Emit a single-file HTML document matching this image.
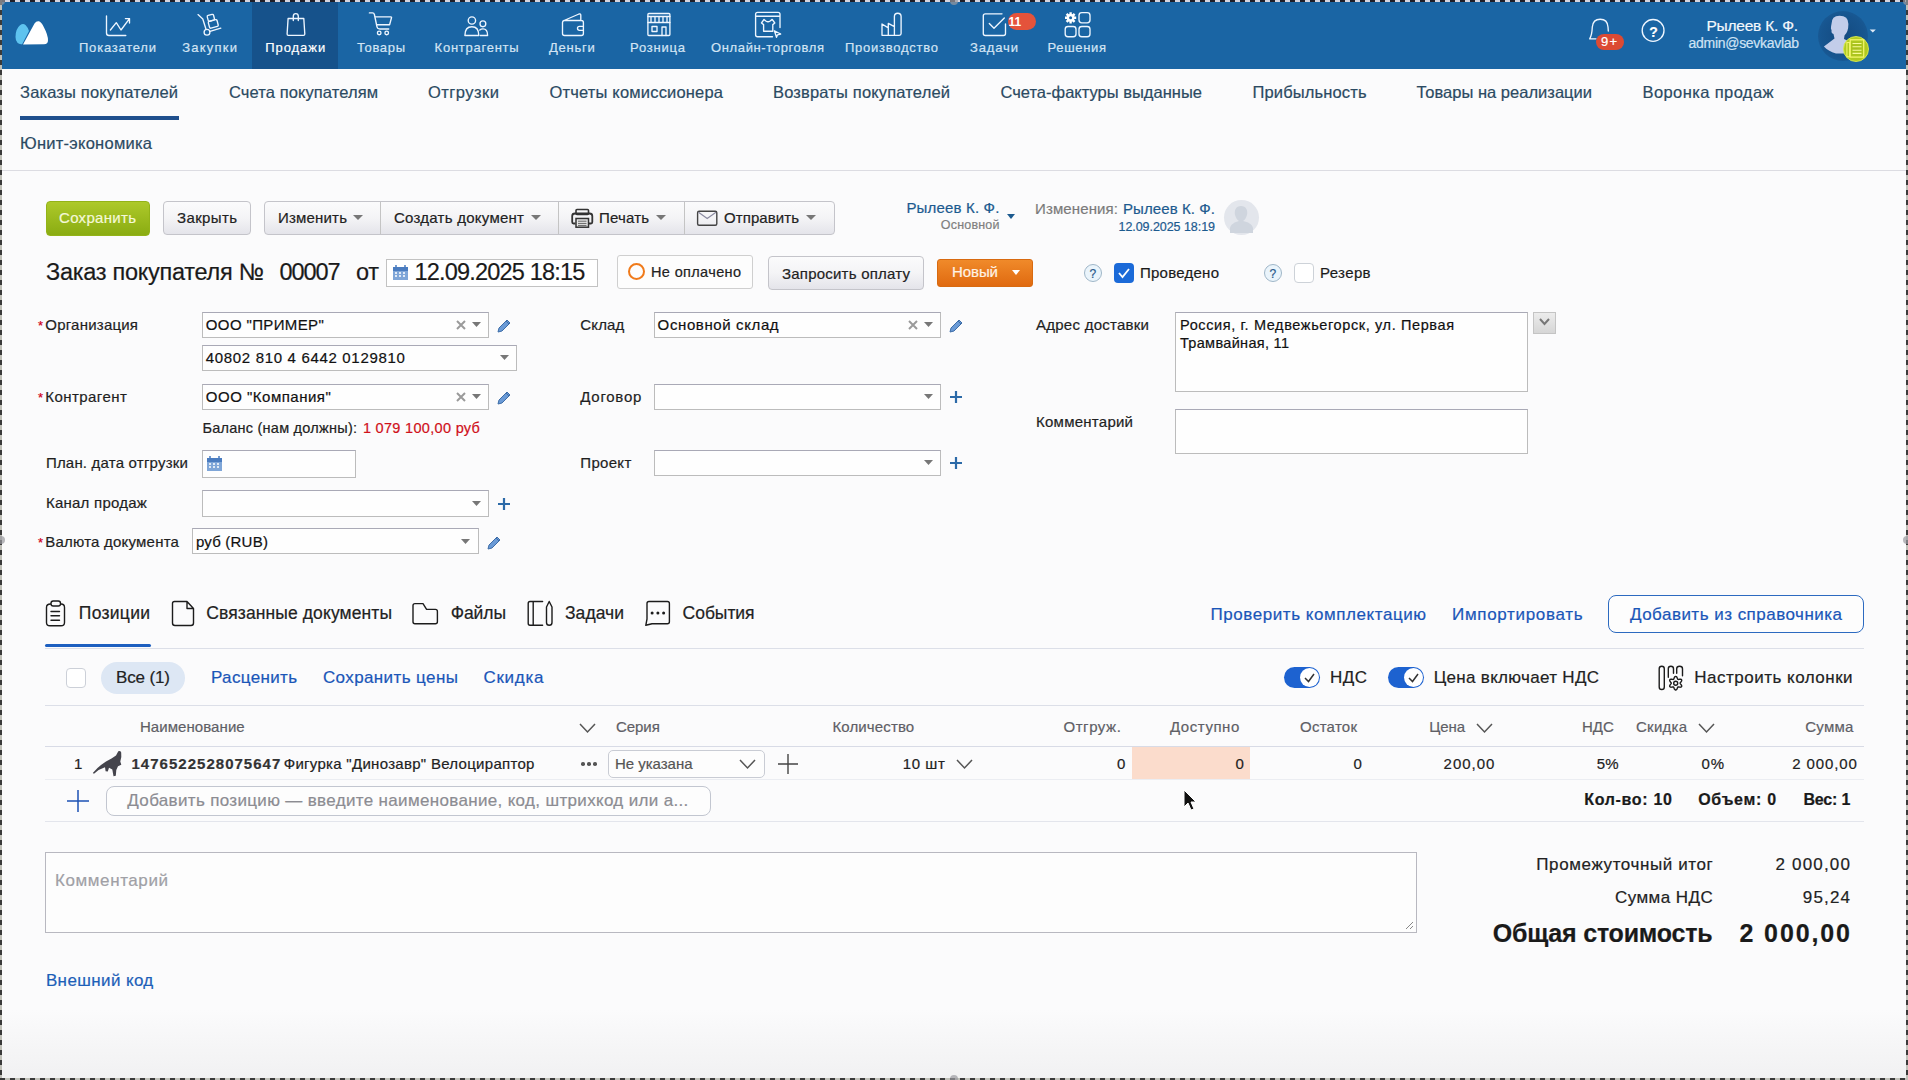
<!DOCTYPE html>
<html><head><meta charset="utf-8"><style>
html,body{margin:0;padding:0;}
body{width:1908px;height:1080px;position:relative;overflow:hidden;background:#fbfbfc;font-family:"Liberation Sans", sans-serif;}
div{-webkit-text-stroke:0.2px currentColor;}
</style></head><body>
<div style="position:absolute;left:0px;top:0px;width:1908px;height:1080px;background:linear-gradient(#fbfbfc 0,#fbfbfc 1010px,#f1f1f2 1078px)"></div>
<div style="position:absolute;left:0px;top:0px;width:1908px;height:69px;background:#1a65a4"></div>
<div style="position:absolute;left:252px;top:0px;width:86px;height:69px;background:#16528b"></div>
<svg style="position:absolute;left:0;top:0" width="60" height="60"><path d="M23 44.4 Q15.5 44.4 15.5 37 Q15.5 29 20 25.3 Q23 23 25.5 25 Q28 27.5 29 31 L22 44.4 Z" fill="#5ec3ef"/><path d="M23 44.4 L34.5 23.5 Q36.5 20.6 39 21.3 Q41.5 22.3 44 27.5 Q48 35 48 40.3 Q48 44.3 44 44.3 Z" fill="#ffffff"/></svg>
<svg style="position:absolute;left:0;top:0" width="1908" height="69" viewBox="0 0 1908 69">
<path d="M106.5 16 V33 Q106.5 35.5 109 35.5 H125.8" fill="none" stroke="#eef6ff" stroke-width="1.35" stroke-linecap="round" stroke-linejoin="round"/>
<path d="M110.4 30 L116.3 22.7 L121 30 L129.5 18.6 M125.4 18.6 H129.5 V23" fill="none" stroke="#eef6ff" stroke-width="1.35" stroke-linecap="round" stroke-linejoin="round"/>
<path d="M198 14.6 L202.8 19 L206 29.2" fill="none" stroke="#eef6ff" stroke-width="1.35" stroke-linecap="round" stroke-linejoin="round"/><circle cx="207" cy="32.2" r="2.9" fill="none" stroke="#eef6ff" stroke-width="1.35" stroke-linecap="round" stroke-linejoin="round"/><path d="M210 31.3 L220.8 28.2" fill="none" stroke="#eef6ff" stroke-width="1.35" stroke-linecap="round" stroke-linejoin="round"/>
<g transform="rotate(-15 212.5 21)"><rect x="208.5" y="14.5" width="6.5" height="6" rx="1.2" fill="none" stroke="#eef6ff" stroke-width="1.35" stroke-linecap="round" stroke-linejoin="round"/><rect x="208" y="20.5" width="9" height="7" rx="1.2" fill="none" stroke="#eef6ff" stroke-width="1.35" stroke-linecap="round" stroke-linejoin="round"/></g>
<path d="M288.1 18.5 H303.8 L304.8 34 Q304.8 35.3 303.5 35.3 H288.4 Q287.1 35.3 287.1 34 Z" fill="none" stroke="#eef6ff" stroke-width="1.35" stroke-linecap="round" stroke-linejoin="round"/>
<path d="M293.3 20.5 V16.3 Q293.3 13.6 295.8 13.6 Q298.3 13.6 298.3 16.3 V20.5" fill="none" stroke="#eef6ff" stroke-width="1.35" stroke-linecap="round" stroke-linejoin="round"/>
<path d="M369.4 12.9 H372.5 Q374 12.9 374.4 14.5 L376.9 26.5 Q377.3 29 379.8 29 H388.7" fill="none" stroke="#eef6ff" stroke-width="1.35" stroke-linecap="round" stroke-linejoin="round"/>
<path d="M375.3 16.8 H390.8 Q391.8 16.8 391.5 17.8 L389.6 24.7 H376.8" fill="none" stroke="#eef6ff" stroke-width="1.35" stroke-linecap="round" stroke-linejoin="round"/>
<circle cx="379.2" cy="32.9" r="1.8" fill="none" stroke="#eef6ff" stroke-width="1.35" stroke-linecap="round" stroke-linejoin="round"/><circle cx="386.7" cy="32.9" r="1.8" fill="none" stroke="#eef6ff" stroke-width="1.35" stroke-linecap="round" stroke-linejoin="round"/>
<circle cx="471.9" cy="20.5" r="3.7" fill="none" stroke="#eef6ff" stroke-width="1.35" stroke-linecap="round" stroke-linejoin="round"/><path d="M464.9 35.5 Q464.9 26.7 471.9 26.7 Q478.8 26.7 478.8 35.5 Z" fill="none" stroke="#eef6ff" stroke-width="1.35" stroke-linecap="round" stroke-linejoin="round"/>
<circle cx="482.9" cy="23.8" r="2.9" fill="none" stroke="#eef6ff" stroke-width="1.35" stroke-linecap="round" stroke-linejoin="round"/><path d="M480.3 35.5 H487.6 Q487.6 28.9 483 28.9 Q481 28.9 479.8 30" fill="none" stroke="#eef6ff" stroke-width="1.35" stroke-linecap="round" stroke-linejoin="round"/>
<path d="M564.5 20.5 H581.4 Q583.4 20.5 583.4 22.5 V33.5 Q583.4 35.5 581.4 35.5 H564.5 Q562.5 35.5 562.5 33.5 V22.5 Q562.5 21 564 20.5 L579 14 Q580.8 13.3 580.8 15.3 V20.5" fill="none" stroke="#eef6ff" stroke-width="1.35" stroke-linecap="round" stroke-linejoin="round"/>
<path d="M583.4 26.3 H579.5 Q577.5 26.3 577.5 28.3 Q577.5 30.4 579.5 30.4 H583.4" fill="none" stroke="#eef6ff" stroke-width="1.35" stroke-linecap="round" stroke-linejoin="round"/>
<rect x="647.9" y="13.5" width="22" height="22" rx="1" fill="none" stroke="#eef6ff" stroke-width="1.35" stroke-linecap="round" stroke-linejoin="round"/><path d="M647.9 16.5 H669.9 M647.9 22.5 H669.9 M651 16.5 V22.5 M655 16.5 V22.5 M659 16.5 V22.5 M663 16.5 V22.5 M667 16.5 V22.5" fill="none" stroke="#eef6ff" stroke-width="1.35" stroke-linecap="round" stroke-linejoin="round"/>
<rect x="652" y="26.5" width="5" height="5" fill="none" stroke="#eef6ff" stroke-width="1.35" stroke-linecap="round" stroke-linejoin="round"/><path d="M662 35.5 V27 H666 V35.5" fill="none" stroke="#eef6ff" stroke-width="1.35" stroke-linecap="round" stroke-linejoin="round"/>
<path d="M772.5 36.7 H757.6 Q755.6 36.7 755.6 34.7 V14.3 Q755.6 12.3 757.6 12.3 H778 Q780 12.3 780 14.3 V27.5 M755.6 16.3 H780" fill="none" stroke="#eef6ff" stroke-width="1.35" stroke-linecap="round" stroke-linejoin="round"/>
<path d="M764 19.4 L766.2 21.2 Q768 22.4 769.8 21.2 L772.2 19.4 L774.8 23 L772.8 24.6 V31.2 H763.6 V24.6 L761.5 23 Z" fill="none" stroke="#eef6ff" stroke-width="1.35" stroke-linecap="round" stroke-linejoin="round"/>
<path d="M774.4 30.8 L780.7 34 L777.5 34.8 L776.5 37.3 Z" fill="none" stroke="#eef6ff" stroke-width="1.35" stroke-linecap="round" stroke-linejoin="round"/>
<path d="M882 35.3 V24 L888.3 27.8 M888.3 35.3 V23.4 L894.4 26.6 M894.4 35.3 V16.5 Q894.4 13.2 897.7 13.2 Q901.1 13.2 901.1 16.5 V33.5 Q901.1 35.3 899.3 35.3 H882" fill="none" stroke="#eef6ff" stroke-width="1.35" stroke-linecap="round" stroke-linejoin="round"/>
<path d="M1002 13.8 H985.3 Q983.3 13.8 983.3 15.8 V33.5 Q983.3 35.5 985.3 35.5 H1003.5 Q1005.5 35.5 1005.5 33.5 V24" fill="none" stroke="#eef6ff" stroke-width="1.35" stroke-linecap="round" stroke-linejoin="round"/>
<path d="M989.3 23.5 L994 28.3 L1004.3 18" fill="none" stroke="#eef6ff" stroke-width="1.35" stroke-linecap="round" stroke-linejoin="round"/>
<rect x="1079" y="12.6" width="11" height="10.3" rx="2.8" fill="none" stroke="#eef6ff" stroke-width="1.35" stroke-linecap="round" stroke-linejoin="round"/><rect x="1065.2" y="26.5" width="10.8" height="10.2" rx="2.8" fill="none" stroke="#eef6ff" stroke-width="1.35" stroke-linecap="round" stroke-linejoin="round"/><rect x="1079" y="26.5" width="11" height="10.2" rx="2.8" fill="none" stroke="#eef6ff" stroke-width="1.35" stroke-linecap="round" stroke-linejoin="round"/>
<g transform="translate(1070.6 17.8)"><circle r="3.9" fill="#fff"/><path d="M0 -5.6 V5.6 M-5.6 0 H5.6 M-4 -4 L4 4 M4 -4 L-4 4" stroke="#fff" stroke-width="2.4"/><circle r="1.5" fill="#1a65a4"/></g>
<path d="M1589.7 38.8 Q1592 35 1592.3 27 Q1593 19.2 1600.2 19.2 Q1607.5 19.2 1608 27 L1608.3 31 M1589.7 38.8 H1596" fill="none" stroke="#eef6ff" stroke-width="1.35" stroke-linecap="round" stroke-linejoin="round"/>
<circle cx="1653.1" cy="30.4" r="10.9" fill="none" stroke="#eef6ff" stroke-width="1.35" stroke-linecap="round" stroke-linejoin="round"/>
<path d="M1869.7 29.5 H1875.8 L1872.8 32.6 Z" fill="#dfeaf6"/>
</svg>
<div style="position:absolute;left:1008px;top:12.5px;width:28px;height:17px;border-radius:8.5px;background:#e4533b"></div>
<div style="position:absolute;left:1596px;top:33.5px;width:28px;height:16.5px;border-radius:8px;background:#dc4a33"></div>
<div style="position:absolute;left:1818px;top:11px;width:50px;height:50px;border-radius:25px;background:radial-gradient(circle at 50% 50%,#144a80 0,#17558f 60%,#1a62a0 100%)"></div>
<svg style="position:absolute;left:0;top:0" width="1908" height="69"><path d="M1839.5 15.8 Q1848.4 15.8 1848.4 24 Q1848.4 32 1844.5 35.5 L1844 39 Q1852 42 1855 48 V53.4 H1836 Q1828 51 1823.9 46.4 Q1830 42 1834.5 38.5 L1833.5 34 Q1831 33 1831.6 30.5 L1830.9 28.3 Q1831 26 1831.5 24 Q1831.5 15.8 1839.5 15.8 Z" fill="#c3cdea"/></svg>
<div style="position:absolute;left:1843px;top:35.5px;width:26px;height:26px;border-radius:13px;background:radial-gradient(circle,#a6bd1a 0,#b2cc22 70%,#cfe23a 100%);border:1.5px solid #d6e84a;box-sizing:border-box"></div>
<svg style="position:absolute;left:0;top:0" width="1908" height="69"><rect x="1850.2" y="39.8" width="13.5" height="17.3" fill="none" stroke="#f2f56a" stroke-width="1.3"/><rect x="1846.9" y="42.5" width="2.6" height="14.3" fill="none" stroke="#f2f56a" stroke-width="1.1"/><path d="M1852.5 43.5 H1861.5 M1852.5 46.8 H1861.5 M1852.5 50.2 H1861.5 M1852.5 53.4 H1861.5" stroke="#f8fa9a" stroke-width="1.1"/></svg>
<div style="position:absolute;left:20px;top:116px;width:159px;height:4px;background:#1f4f8d"></div>
<div style="position:absolute;left:0px;top:170px;width:1908px;height:1px;background:#dcdce2"></div>
<div style="position:absolute;left:46px;top:201px;width:104px;height:35px;background:linear-gradient(#adc92a,#8aac12);border:1px solid #93b318;border-radius:4px;box-sizing:border-box"></div>
<div style="position:absolute;left:163px;top:201px;width:88px;height:34px;background:linear-gradient(#fbfbfc 0,#f4f4f6 50%,#e4e4ea 100%);border:1px solid #c4c4ca;border-radius:4px;box-sizing:border-box"></div>
<div style="position:absolute;left:264px;top:201px;width:571px;height:34px;background:linear-gradient(#fbfbfc 0,#f4f4f6 50%,#e4e4ea 100%);border:1px solid #c4c4ca;border-radius:4px;box-sizing:border-box"></div>
<div style="position:absolute;left:380px;top:202px;width:1px;height:32px;background:#c4c4c4"></div>
<div style="position:absolute;left:558px;top:202px;width:1px;height:32px;background:#c4c4c4"></div>
<div style="position:absolute;left:684px;top:202px;width:1px;height:32px;background:#c4c4c4"></div>
<svg style="position:absolute;left:353px;top:215px" width="10" height="5"><path d="M0 0 H10 L5.0 5 Z" fill="#777"/></svg>
<svg style="position:absolute;left:531px;top:215px" width="10" height="5"><path d="M0 0 H10 L5.0 5 Z" fill="#777"/></svg>
<svg style="position:absolute;left:656px;top:215px" width="10" height="5"><path d="M0 0 H10 L5.0 5 Z" fill="#777"/></svg>
<svg style="position:absolute;left:806px;top:215px" width="10" height="5"><path d="M0 0 H10 L5.0 5 Z" fill="#777"/></svg>
<svg style="position:absolute;left:0;top:0" width="800" height="240"><rect x="576" y="209.5" width="12.5" height="5" rx="1" fill="none" stroke="#333" stroke-width="1.6"/><path d="M575.5 223.5 H573.5 Q572.2 223.5 572.2 222 V216 Q572.2 213.5 575 213.5 H589.5 Q592.3 213.5 592.3 216 V222 Q592.3 223.5 591 223.5 H589" fill="none" stroke="#333" stroke-width="1.8"/><rect x="576" y="218.5" width="12.5" height="8.7" fill="#e8e8e8" stroke="#333" stroke-width="1.5"/><path d="M578 221.2 H586.5 M578 223.4 H586.5 M578 225.4 H586.5" stroke="#555" stroke-width="0.9"/><rect x="697.6" y="211.3" width="19.2" height="14" rx="1.5" fill="none" stroke="#444" stroke-width="1.4"/><path d="M698.5 212.3 L707.2 218.5 L716 212.3" fill="none" stroke="#8a8aa0" stroke-width="1.2"/></svg>
<svg style="position:absolute;left:1007px;top:214px" width="8" height="5"><path d="M0 0 H8 L4.0 5 Z" fill="#1c5a8f"/></svg>
<div style="position:absolute;left:1224px;top:200px;width:35px;height:35px;border-radius:18px;background:#e3e6ec"></div>
<svg style="position:absolute;left:1229px;top:203px;overflow:visible" width="25" height="30" viewBox="0 0 25 30"><path d="M12 3 C17 3 19 7 18 12 C17 15 16 17 14 18 C19 19 23 21 24 25 V30 H1 V25 C2 21 6 19 10 18 C8 17 7 15 6 12 C5 7 7 3 12 3 Z" fill="#cfd5de"/></svg>
<div style="position:absolute;left:386px;top:259px;width:212px;height:28px;background:#fff;border:1px solid #c2c2c2;box-sizing:border-box"></div>
<svg style="position:absolute;left:392px;top:264px;overflow:visible" width="17" height="17" viewBox="0 0 17 17"><rect x="1" y="3" width="15" height="13" fill="#7fa6d8"/><rect x="1" y="3" width="15" height="4" fill="#4a7cc0"/><path d="M4 1 V5 M13 1 V5" stroke="#4a7cc0" stroke-width="1.5"/><path d="M3 9 H5 M7 9 H9 M11 9 H13 M3 12 H5 M7 12 H9 M11 12 H13" stroke="#fff" stroke-width="1.5"/></svg>
<div style="position:absolute;left:617px;top:255px;width:136px;height:34px;background:#fdfdfd;border:1px solid #cfcfcf;border-radius:3px;box-sizing:border-box"></div>
<div style="position:absolute;left:628px;top:263px;width:17px;height:17px;border-radius:50%;border:2.5px solid #f07a1a;box-sizing:border-box"></div>
<div style="position:absolute;left:768px;top:256px;width:156px;height:34px;background:linear-gradient(#fbfbfc 0,#f4f4f6 50%,#e4e4ea 100%);border:1px solid #c4c4ca;border-radius:4px;box-sizing:border-box"></div>
<div style="position:absolute;left:937px;top:259px;width:96px;height:28px;background:linear-gradient(#f08a2a,#e06a10);border:1px solid #d86a10;border-radius:3px;box-sizing:border-box"></div>
<svg style="position:absolute;left:1012px;top:270px" width="8" height="5"><path d="M0 0 H8 L4.0 5 Z" fill="#ffffff"/></svg>
<div style="position:absolute;left:1084px;top:264px;width:18px;height:18px;border-radius:50%;border:1px solid #9fb6c8;background:#eaf4fb;box-sizing:border-box"></div>
<div style="position:absolute;left:1264px;top:264px;width:18px;height:18px;border-radius:50%;border:1px solid #9fb6c8;background:#eaf4fb;box-sizing:border-box"></div>
<div style="position:absolute;left:1114px;top:263px;width:20px;height:20px;background:#1b6ad8;border-radius:4px"></div>
<svg style="position:absolute;left:1116px;top:265px;overflow:visible" width="16" height="16" viewBox="0 0 16 16"><path d="M3 8 L6.5 12 L13 4" fill="none" stroke="#fff" stroke-width="1.8"/></svg>
<div style="position:absolute;left:1294px;top:263px;width:20px;height:20px;background:#fff;border:1px solid #cdd2d8;border-radius:4px;box-sizing:border-box"></div>
<div style="position:absolute;left:202px;top:312px;width:287px;height:26px;background:#fefefe;border:1px solid #bcbcbc;border-top-color:#a9a9b6;box-sizing:border-box"></div>
<svg style="position:absolute;left:456px;top:320px;overflow:visible" width="10" height="10" viewBox="0 0 10 10"><path d="M1 1 L9 9 M9 1 L1 9" stroke="#9a9a9a" stroke-width="2"/></svg>
<svg style="position:absolute;left:472px;top:322px" width="9" height="5"><path d="M0 0 H9 L4.5 5 Z" fill="#777"/></svg>
<svg style="position:absolute;left:496px;top:317px;overflow:visible" width="16" height="16" viewBox="0 0 16 16"><path d="M3 11 L11 3 L14 6 L6 14 L2 15 Z" fill="#6a9ad6" stroke="#3d6da8" stroke-width="1"/><path d="M10 4 L13 7" stroke="#3d6da8" stroke-width="1"/></svg>
<div style="position:absolute;left:202px;top:345px;width:315px;height:26px;background:#fefefe;border:1px solid #bcbcbc;border-top-color:#a9a9b6;box-sizing:border-box"></div>
<svg style="position:absolute;left:500px;top:355px" width="9" height="5"><path d="M0 0 H9 L4.5 5 Z" fill="#777"/></svg>
<div style="position:absolute;left:202px;top:384px;width:287px;height:26px;background:#fefefe;border:1px solid #bcbcbc;border-top-color:#a9a9b6;box-sizing:border-box"></div>
<svg style="position:absolute;left:456px;top:392px;overflow:visible" width="10" height="10" viewBox="0 0 10 10"><path d="M1 1 L9 9 M9 1 L1 9" stroke="#9a9a9a" stroke-width="2"/></svg>
<svg style="position:absolute;left:472px;top:394px" width="9" height="5"><path d="M0 0 H9 L4.5 5 Z" fill="#777"/></svg>
<svg style="position:absolute;left:496px;top:389px;overflow:visible" width="16" height="16" viewBox="0 0 16 16"><path d="M3 11 L11 3 L14 6 L6 14 L2 15 Z" fill="#6a9ad6" stroke="#3d6da8" stroke-width="1"/><path d="M10 4 L13 7" stroke="#3d6da8" stroke-width="1"/></svg>
<div style="position:absolute;left:202px;top:450px;width:154px;height:28px;background:#fefefe;border:1px solid #bcbcbc;border-top-color:#a9a9b6;box-sizing:border-box"></div>
<svg style="position:absolute;left:206px;top:455px;overflow:visible" width="17" height="17" viewBox="0 0 17 17"><rect x="1" y="3" width="15" height="13" fill="#7fa6d8"/><rect x="1" y="3" width="15" height="4" fill="#4a7cc0"/><path d="M4 1 V5 M13 1 V5" stroke="#4a7cc0" stroke-width="1.5"/><path d="M3 9 H5 M7 9 H9 M11 9 H13 M3 12 H5 M7 12 H9 M11 12 H13" stroke="#fff" stroke-width="1.5"/></svg>
<div style="position:absolute;left:202px;top:490px;width:287px;height:27px;background:#fefefe;border:1px solid #bcbcbc;border-top-color:#a9a9b6;box-sizing:border-box"></div>
<svg style="position:absolute;left:472px;top:501px" width="9" height="5"><path d="M0 0 H9 L4.5 5 Z" fill="#777"/></svg>
<svg style="position:absolute;left:497px;top:497px;overflow:visible" width="14" height="14" viewBox="0 0 14 14"><path d="M7 1 V13 M1 7 H13" stroke="#2c6aa8" stroke-width="2.2"/></svg>
<div style="position:absolute;left:192px;top:528px;width:287px;height:26px;background:#fefefe;border:1px solid #bcbcbc;border-top-color:#a9a9b6;box-sizing:border-box"></div>
<svg style="position:absolute;left:461px;top:539px" width="9" height="5"><path d="M0 0 H9 L4.5 5 Z" fill="#777"/></svg>
<svg style="position:absolute;left:486px;top:534px;overflow:visible" width="16" height="16" viewBox="0 0 16 16"><path d="M3 11 L11 3 L14 6 L6 14 L2 15 Z" fill="#6a9ad6" stroke="#3d6da8" stroke-width="1"/><path d="M10 4 L13 7" stroke="#3d6da8" stroke-width="1"/></svg>
<div style="position:absolute;left:654px;top:312px;width:287px;height:26px;background:#fefefe;border:1px solid #bcbcbc;border-top-color:#a9a9b6;box-sizing:border-box"></div>
<svg style="position:absolute;left:908px;top:320px;overflow:visible" width="10" height="10" viewBox="0 0 10 10"><path d="M1 1 L9 9 M9 1 L1 9" stroke="#9a9a9a" stroke-width="2"/></svg>
<svg style="position:absolute;left:924px;top:322px" width="9" height="5"><path d="M0 0 H9 L4.5 5 Z" fill="#777"/></svg>
<svg style="position:absolute;left:948px;top:317px;overflow:visible" width="16" height="16" viewBox="0 0 16 16"><path d="M3 11 L11 3 L14 6 L6 14 L2 15 Z" fill="#6a9ad6" stroke="#3d6da8" stroke-width="1"/><path d="M10 4 L13 7" stroke="#3d6da8" stroke-width="1"/></svg>
<div style="position:absolute;left:654px;top:384px;width:287px;height:26px;background:#fefefe;border:1px solid #bcbcbc;border-top-color:#a9a9b6;box-sizing:border-box"></div>
<svg style="position:absolute;left:924px;top:394px" width="9" height="5"><path d="M0 0 H9 L4.5 5 Z" fill="#777"/></svg>
<svg style="position:absolute;left:949px;top:390px;overflow:visible" width="14" height="14" viewBox="0 0 14 14"><path d="M7 1 V13 M1 7 H13" stroke="#2c6aa8" stroke-width="2.2"/></svg>
<div style="position:absolute;left:654px;top:450px;width:287px;height:26px;background:#fefefe;border:1px solid #bcbcbc;border-top-color:#a9a9b6;box-sizing:border-box"></div>
<svg style="position:absolute;left:924px;top:460px" width="9" height="5"><path d="M0 0 H9 L4.5 5 Z" fill="#777"/></svg>
<svg style="position:absolute;left:949px;top:456px;overflow:visible" width="14" height="14" viewBox="0 0 14 14"><path d="M7 1 V13 M1 7 H13" stroke="#2c6aa8" stroke-width="2.2"/></svg>
<div style="position:absolute;left:1175px;top:312px;width:353px;height:80px;background:#fefefe;border:1px solid #bcbcbc;border-top-color:#a9a9b6;box-sizing:border-box"></div>
<div style="position:absolute;left:1533px;top:312px;width:23px;height:22px;background:linear-gradient(#ececec,#d6d6d6);border:1px solid #c4c4c4;box-sizing:border-box"></div>
<svg style="position:absolute;left:1539px;top:318px;overflow:visible" width="11" height="8" viewBox="0 0 11 8"><path d="M1 1 L5.5 6 L10 1" fill="none" stroke="#777" stroke-width="2"/></svg>
<div style="position:absolute;left:1175px;top:409px;width:353px;height:45px;background:#fefefe;border:1px solid #bcbcbc;border-top-color:#a9a9b6;box-sizing:border-box"></div>
<svg style="position:absolute;left:0;top:580px" width="800" height="60" viewBox="0 580 800 60">
<path d="M50.5 604 Q46.5 604 46.5 607.5 V622.5 Q46.5 625.8 50 625.8 H61 Q64.5 625.8 64.5 622.5 V607.5 Q64.5 604 61 604" fill="none" stroke="#1c1c1c" stroke-width="1.4" stroke-linejoin="round" stroke-linecap="round"/>
<rect x="51" y="601" width="9.5" height="5" rx="2.2" fill="none" stroke="#1c1c1c" stroke-width="1.4" stroke-linejoin="round" stroke-linecap="round"/>
<path d="M51 611.5 H59.5 M51 615.8 H59.5 M51 620.2 H59.5" fill="none" stroke="#1c1c1c" stroke-width="1.4" stroke-linejoin="round" stroke-linecap="round"/>
<path d="M174.5 601.5 H187 L193.5 608.5 V623 Q193.5 625.5 191 625.5 H175 Q172.5 625.5 172.5 623 V603.5 Q172.5 601.5 174.5 601.5 Z M187 601.5 V608.5 H193.5" fill="none" stroke="#1c1c1c" stroke-width="1.4" stroke-linejoin="round" stroke-linecap="round"/>
<path d="M415 603.6 H423 L426.6 609.4 H435.4 Q437.4 609.4 437.4 611.4 V621.8 Q437.4 623.8 435.4 623.8 H415 Q413 623.8 413 621.8 V605.6 Q413 603.6 415 603.6 Z" fill="none" stroke="#1c1c1c" stroke-width="1.4" stroke-linejoin="round" stroke-linecap="round"/>
<path d="M542.6 601.5 H530 Q528.2 601.5 528.2 603.5 V623.3 Q528.2 625.3 530 625.3 H542.6 M533.2 601.5 V625.3" fill="none" stroke="#1c1c1c" stroke-width="1.4" stroke-linejoin="round" stroke-linecap="round"/>
<path d="M546.5 607 L549.2 601.5 L552 607 V622.5 Q552 625.3 549.2 625.3 Q546.5 625.3 546.5 622.5 Z" fill="none" stroke="#1c1c1c" stroke-width="1.4" stroke-linejoin="round" stroke-linecap="round"/>
<path d="M649 601.5 H667.4 Q669.4 601.5 669.4 603.5 V621.8 Q669.4 623.8 667.4 623.8 H652 L645.8 625.3 L647 619 V603.5 Q647 601.5 649 601.5 Z" fill="none" stroke="#1c1c1c" stroke-width="1.4" stroke-linejoin="round" stroke-linecap="round"/>
<circle cx="652.1" cy="613" r="1.5" fill="#1c1c1c"/><circle cx="657.9" cy="613" r="1.5" fill="#1c1c1c"/><circle cx="663.6" cy="613" r="1.5" fill="#1c1c1c"/>
</svg>
<div style="position:absolute;left:45px;top:644px;width:106px;height:3px;background:#1d5fc0;border-radius:2px"></div>
<div style="position:absolute;left:45px;top:648px;width:1819px;height:1px;background:#dcdfe8"></div>
<div style="position:absolute;left:1608px;top:595px;width:256px;height:38px;background:#fdfdfd;border:1.5px solid #2c6ac0;border-radius:8px;box-sizing:border-box"></div>
<div style="position:absolute;left:66px;top:668px;width:20px;height:20px;background:#fff;border:1.5px solid #ccd0d8;border-radius:4px;box-sizing:border-box"></div>
<div style="position:absolute;left:101px;top:662px;width:84px;height:32px;background:#dde7f4;border-radius:16px"></div>
<div style="position:absolute;left:1284px;top:667px;width:36px;height:21px;background:#1d62d0;border-radius:11px"></div>
<div style="position:absolute;left:1300px;top:668px;width:19px;height:19px;border-radius:50%;background:#fff"></div>
<svg style="position:absolute;left:1303px;top:671px;overflow:visible" width="13" height="13" viewBox="0 0 13 13"><path d="M2 7 L5.5 10.5 L11 3" fill="none" stroke="#333" stroke-width="1.5"/></svg>
<div style="position:absolute;left:1388px;top:667px;width:36px;height:21px;background:#1d62d0;border-radius:11px"></div>
<div style="position:absolute;left:1404px;top:668px;width:19px;height:19px;border-radius:50%;background:#fff"></div>
<svg style="position:absolute;left:1407px;top:671px;overflow:visible" width="13" height="13" viewBox="0 0 13 13"><path d="M2 7 L5.5 10.5 L11 3" fill="none" stroke="#333" stroke-width="1.5"/></svg>
<svg style="position:absolute;left:0;top:0" width="1908" height="720"><rect x="1659.2" y="666.2" width="5.1" height="23.3" rx="2.55" fill="none" stroke="#1c1c1c" stroke-width="1.4" stroke-linejoin="round" stroke-linecap="round"/><path d="M1668.3 677.3 V668.8 Q1668.3 666.3 1670.9 666.3 Q1673.5 666.3 1673.5 668.8 V673.3 M1676.7 673.3 V668.8 Q1676.7 666.3 1679.6 666.3 Q1682.5 666.3 1682.5 668.8 V675.7" fill="none" stroke="#1c1c1c" stroke-width="1.4" stroke-linejoin="round" stroke-linecap="round"/><path d="M1680.10 683.20 L1680.24 683.60 L1680.62 684.07 L1681.11 684.65 L1681.53 685.32 L1681.72 686.01 L1681.59 686.60 L1681.14 687.01 L1680.45 687.19 L1679.66 687.16 L1678.91 687.03 L1678.32 686.94 L1677.90 687.01 L1677.63 687.33 L1677.41 687.90 L1677.15 688.61 L1676.78 689.31 L1676.28 689.81 L1675.70 690.00 L1675.12 689.81 L1674.62 689.31 L1674.25 688.61 L1673.99 687.90 L1673.77 687.33 L1673.50 687.01 L1673.08 686.94 L1672.49 687.03 L1671.74 687.16 L1670.95 687.19 L1670.26 687.01 L1669.81 686.60 L1669.68 686.01 L1669.87 685.32 L1670.29 684.65 L1670.78 684.07 L1671.16 683.60 L1671.30 683.20 L1671.16 682.80 L1670.78 682.33 L1670.29 681.75 L1669.87 681.08 L1669.68 680.39 L1669.81 679.80 L1670.26 679.39 L1670.95 679.21 L1671.74 679.24 L1672.49 679.37 L1673.08 679.46 L1673.50 679.39 L1673.77 679.07 L1673.99 678.50 L1674.25 677.79 L1674.62 677.09 L1675.12 676.59 L1675.70 676.40 L1676.28 676.59 L1676.78 677.09 L1677.15 677.79 L1677.41 678.50 L1677.63 679.07 L1677.90 679.39 L1678.32 679.46 L1678.91 679.37 L1679.66 679.24 L1680.45 679.21 L1681.14 679.39 L1681.59 679.80 L1681.72 680.39 L1681.53 681.08 L1681.11 681.75 L1680.62 682.33 L1680.24 682.80 Z" fill="#fbfbfc" fill="none" stroke="#1c1c1c" stroke-width="1.4" stroke-linejoin="round" stroke-linecap="round"/><circle cx="1675.7" cy="683.2" r="2" fill="none" stroke="#1c1c1c" stroke-width="1.4" stroke-linejoin="round" stroke-linecap="round"/></svg>
<div style="position:absolute;left:45px;top:705px;width:1819px;height:1px;background:#dcdfe8"></div>
<svg style="position:absolute;left:579px;top:723px;overflow:visible" width="17" height="10" viewBox="0 0 17 10"><path d="M1 1 L8.5 9 L16 1" fill="none" stroke="#555" stroke-width="1.5"/></svg>
<svg style="position:absolute;left:1476px;top:723px;overflow:visible" width="17" height="10" viewBox="0 0 17 10"><path d="M1 1 L8.5 9 L16 1" fill="none" stroke="#555" stroke-width="1.5"/></svg>
<svg style="position:absolute;left:1698px;top:723px;overflow:visible" width="17" height="10" viewBox="0 0 17 10"><path d="M1 1 L8.5 9 L16 1" fill="none" stroke="#555" stroke-width="1.5"/></svg>
<div style="position:absolute;left:45px;top:746px;width:1819px;height:1px;background:#d8dbe6"></div>
<div style="position:absolute;left:1132px;top:747px;width:118px;height:33px;background:#fbdccc"></div>
<svg style="position:absolute;left:0;top:0" width="200" height="800"><path d="M92.8 772.9 Q97 768 101 765 L106 761.5 L111.5 758.5 L116 755.5 L118.3 751.2 Q120.5 750.5 121.2 752.5 L121.3 757 L120.3 761.5 L121.3 764.8 L118 766.2 L116.3 770 L115.8 775.8 L113.5 776.2 L112.3 769.5 L109 767.8 L107.8 771.4 L105.6 771.2 L105 767.3 Q99 769 94 773.8 Z" fill="#44444c"/></svg>
<div style="position:absolute;left:581px;top:762px;width:3.5px;height:3.5px;border-radius:50%;background:#555"></div>
<div style="position:absolute;left:587px;top:762px;width:3.5px;height:3.5px;border-radius:50%;background:#555"></div>
<div style="position:absolute;left:593px;top:762px;width:3.5px;height:3.5px;border-radius:50%;background:#555"></div>
<div style="position:absolute;left:608px;top:750px;width:157px;height:28px;background:#fdfdfd;border:1px solid #c9ccd4;border-radius:5px;box-sizing:border-box"></div>
<svg style="position:absolute;left:739px;top:759px;overflow:visible" width="17" height="10" viewBox="0 0 17 10"><path d="M1 1 L8.5 9 L16 1" fill="none" stroke="#555" stroke-width="1.5"/></svg>
<svg style="position:absolute;left:777px;top:753px;overflow:visible" width="22" height="22" viewBox="0 0 22 22"><path d="M11 1 V21 M1 11 H21" stroke="#444" stroke-width="1.4"/></svg>
<svg style="position:absolute;left:955.7px;top:759px;overflow:visible" width="17" height="10" viewBox="0 0 17 10"><path d="M1 1 L8.5 9 L16 1" fill="none" stroke="#555" stroke-width="1.5"/></svg>
<div style="position:absolute;left:45px;top:779px;width:1819px;height:1px;background:#ebedf2"></div>
<svg style="position:absolute;left:66px;top:789px;overflow:visible" width="24" height="24" viewBox="0 0 24 24"><path d="M12 1 V23 M1 12 H23" stroke="#1d52b4" stroke-width="1.5"/></svg>
<div style="position:absolute;left:106px;top:786px;width:605px;height:30px;background:#fdfdfd;border:1.5px solid #c2c6d0;border-radius:8px;box-sizing:border-box"></div>
<div style="position:absolute;left:45px;top:821px;width:1819px;height:1px;background:#e3e5ec"></div>
<svg style="position:absolute;left:1182px;top:789px;overflow:visible" width="16" height="24" viewBox="0 0 16 24"><path d="M2 1 V18 L6 14 L9 21 L12 20 L9 13 L14 13 Z" fill="#111" stroke="#fff" stroke-width="1"/></svg>
<div style="position:absolute;left:45px;top:852px;width:1372px;height:81px;background:#fdfdfd;border:1px solid #b8b8c0;box-sizing:border-box"></div>
<svg style="position:absolute;left:1404px;top:920px;overflow:visible" width="10" height="10" viewBox="0 0 10 10"><path d="M9 2 L2 9 M9 6 L6 9" stroke="#888" stroke-width="1"/></svg>
<div style="position:absolute;left:0px;top:0px;width:1908px;height:1.6px;background:repeating-linear-gradient(90deg,#1e1e28 0 5px,#d4d4e0 5px 10px)"></div>
<div style="position:absolute;left:0px;top:0px;width:1.6px;height:1080px;background:repeating-linear-gradient(#3a3a3a 0 5px,#c0c0b8 5px 10px)"></div>
<div style="position:absolute;left:1906px;top:0px;width:2px;height:1080px;background:repeating-linear-gradient(#3a3a3a 0 5px,#c0c0b8 5px 10px)"></div>
<div style="position:absolute;left:0px;top:1078.4px;width:1908px;height:1.6px;background:repeating-linear-gradient(90deg,#3a3a3a 0 5px,#c0c0b8 5px 10px)"></div>
<div style="position:absolute;left:950px;top:-3px;width:8px;height:8px;border-radius:50%;background:#9a9aa0;opacity:.7"></div>
<div style="position:absolute;left:-3px;top:536px;width:8px;height:8px;border-radius:50%;background:#9a9aa0;opacity:.7"></div>
<div style="position:absolute;left:1903px;top:536px;width:8px;height:8px;border-radius:50%;background:#9a9aa0;opacity:.7"></div>
<div style="position:absolute;left:950px;top:1075px;width:8px;height:8px;border-radius:50%;background:#9a9aa0;opacity:.7"></div>
<div style="position:absolute;left:1903px;top:-3px;width:8px;height:8px;border-radius:50%;background:#9a9aa0;opacity:.7"></div>
<div style="position:absolute;left:-3px;top:-3px;width:8px;height:8px;border-radius:50%;background:#9a9aa0;opacity:.7"></div>
<div style="position:absolute;left:79.00px;top:41.00px;font-size:13px;line-height:13px;font-weight:400;color:#d3e4f4;letter-spacing:0.778px;white-space:pre;">Показатели</div>
<div style="position:absolute;left:182.30px;top:41.00px;font-size:13px;line-height:13px;font-weight:400;color:#d3e4f4;letter-spacing:1.199px;white-space:pre;">Закупки</div>
<div style="position:absolute;left:265.20px;top:41.00px;font-size:13px;line-height:13px;font-weight:400;color:#ffffff;letter-spacing:0.951px;white-space:pre;">Продажи</div>
<div style="position:absolute;left:357.00px;top:41.00px;font-size:13px;line-height:13px;font-weight:400;color:#d3e4f4;letter-spacing:0.653px;white-space:pre;">Товары</div>
<div style="position:absolute;left:434.60px;top:41.00px;font-size:13px;line-height:13px;font-weight:400;color:#d3e4f4;letter-spacing:0.744px;white-space:pre;">Контрагенты</div>
<div style="position:absolute;left:549.00px;top:41.00px;font-size:13px;line-height:13px;font-weight:400;color:#d3e4f4;letter-spacing:0.740px;white-space:pre;">Деньги</div>
<div style="position:absolute;left:630.00px;top:41.00px;font-size:13px;line-height:13px;font-weight:400;color:#d3e4f4;letter-spacing:0.789px;white-space:pre;">Розница</div>
<div style="position:absolute;left:711.00px;top:41.00px;font-size:13px;line-height:13px;font-weight:400;color:#d3e4f4;letter-spacing:0.637px;white-space:pre;">Онлайн-торговля</div>
<div style="position:absolute;left:845.00px;top:41.00px;font-size:13px;line-height:13px;font-weight:400;color:#d3e4f4;letter-spacing:0.749px;white-space:pre;">Производство</div>
<div style="position:absolute;left:970.00px;top:41.00px;font-size:13px;line-height:13px;font-weight:400;color:#d3e4f4;letter-spacing:0.869px;white-space:pre;">Задачи</div>
<div style="position:absolute;left:1047.60px;top:41.00px;font-size:13px;line-height:13px;font-weight:400;color:#d3e4f4;letter-spacing:0.653px;white-space:pre;">Решения</div>
<div style="position:absolute;left:1008.50px;top:15.84px;font-size:12px;line-height:12px;font-weight:700;color:#ffffff;letter-spacing:0.000px;white-space:pre;-webkit-text-stroke:0">11</div>
<div style="position:absolute;left:1601.00px;top:34.60px;font-size:13px;line-height:13px;font-weight:400;color:#ffffff;letter-spacing:1.172px;white-space:pre;">9+</div>
<div style="position:absolute;left:1649.20px;top:25.15px;font-size:14px;line-height:14px;font-weight:700;color:#ffffff;letter-spacing:0.000px;white-space:pre;">?</div>
<div style="position:absolute;left:1706.50px;top:18.38px;font-size:15.5px;line-height:15.5px;font-weight:400;color:#f4f8fc;letter-spacing:-0.232px;white-space:pre;">Рылеев К. Ф.</div>
<div style="position:absolute;left:1688.60px;top:36.15px;font-size:14px;line-height:14px;font-weight:400;color:#cfe2f4;letter-spacing:-0.301px;white-space:pre;">admin@sevkavlab</div>
<div style="position:absolute;left:20.00px;top:84.03px;font-size:16.5px;line-height:16.5px;font-weight:400;color:#2b4a62;letter-spacing:0.161px;white-space:pre;">Заказы покупателей</div>
<div style="position:absolute;left:229.00px;top:84.03px;font-size:16.5px;line-height:16.5px;font-weight:400;color:#2b4a62;letter-spacing:0.093px;white-space:pre;">Счета покупателям</div>
<div style="position:absolute;left:428.00px;top:84.03px;font-size:16.5px;line-height:16.5px;font-weight:400;color:#2b4a62;letter-spacing:0.478px;white-space:pre;">Отгрузки</div>
<div style="position:absolute;left:549.50px;top:84.03px;font-size:16.5px;line-height:16.5px;font-weight:400;color:#2b4a62;letter-spacing:0.178px;white-space:pre;">Отчеты комиссионера</div>
<div style="position:absolute;left:773.00px;top:84.03px;font-size:16.5px;line-height:16.5px;font-weight:400;color:#2b4a62;letter-spacing:0.165px;white-space:pre;">Возвраты покупателей</div>
<div style="position:absolute;left:1000.50px;top:84.03px;font-size:16.5px;line-height:16.5px;font-weight:400;color:#2b4a62;letter-spacing:0.010px;white-space:pre;">Счета-фактуры выданные</div>
<div style="position:absolute;left:1252.50px;top:84.03px;font-size:16.5px;line-height:16.5px;font-weight:400;color:#2b4a62;letter-spacing:0.138px;white-space:pre;">Прибыльность</div>
<div style="position:absolute;left:1416.50px;top:84.03px;font-size:16.5px;line-height:16.5px;font-weight:400;color:#2b4a62;letter-spacing:0.015px;white-space:pre;">Товары на реализации</div>
<div style="position:absolute;left:1642.50px;top:84.03px;font-size:16.5px;line-height:16.5px;font-weight:400;color:#2b4a62;letter-spacing:0.403px;white-space:pre;">Воронка продаж</div>
<div style="position:absolute;left:20.00px;top:134.73px;font-size:16.5px;line-height:16.5px;font-weight:400;color:#2b4a62;letter-spacing:0.256px;white-space:pre;">Юнит-экономика</div>
<div style="position:absolute;left:59.00px;top:210.30px;font-size:15px;line-height:15px;font-weight:400;color:#f4f8d8;letter-spacing:0.307px;white-space:pre;">Сохранить</div>
<div style="position:absolute;left:177.00px;top:210.30px;font-size:15px;line-height:15px;font-weight:400;color:#222;letter-spacing:0.370px;white-space:pre;">Закрыть</div>
<div style="position:absolute;left:278.00px;top:210.30px;font-size:15px;line-height:15px;font-weight:400;color:#222;letter-spacing:0.190px;white-space:pre;">Изменить</div>
<div style="position:absolute;left:394.00px;top:210.30px;font-size:15px;line-height:15px;font-weight:400;color:#222;letter-spacing:0.257px;white-space:pre;">Создать документ</div>
<div style="position:absolute;left:599.00px;top:210.30px;font-size:15px;line-height:15px;font-weight:400;color:#222;letter-spacing:0.172px;white-space:pre;">Печать</div>
<div style="position:absolute;left:724.00px;top:210.30px;font-size:15px;line-height:15px;font-weight:400;color:#222;letter-spacing:0.076px;white-space:pre;">Отправить</div>
<div style="position:absolute;left:906.40px;top:200.30px;font-size:15px;line-height:15px;font-weight:400;color:#1c5a8f;letter-spacing:0.180px;white-space:pre;">Рылеев К. Ф.</div>
<div style="position:absolute;left:940.80px;top:218.92px;font-size:12.5px;line-height:12.5px;font-weight:400;color:#808080;letter-spacing:0.198px;white-space:pre;">Основной</div>
<div style="position:absolute;left:1035.00px;top:201.30px;font-size:15px;line-height:15px;font-weight:400;color:#7a7a7a;letter-spacing:0.122px;white-space:pre;">Изменения:</div>
<div style="position:absolute;left:1123.00px;top:201.30px;font-size:15px;line-height:15px;font-weight:400;color:#1c5a8f;letter-spacing:0.089px;white-space:pre;">Рылеев К. Ф.</div>
<div style="position:absolute;left:1118.50px;top:221.42px;font-size:12.5px;line-height:12.5px;font-weight:400;color:#1c5a8f;letter-spacing:-0.055px;white-space:pre;">12.09.2025 18:19</div>
<div style="position:absolute;left:46.00px;top:261.11px;font-size:23.5px;line-height:23.5px;font-weight:400;color:#1a1a1a;letter-spacing:-0.266px;white-space:pre;">Заказ покупателя №</div>
<div style="position:absolute;left:279.50px;top:261.11px;font-size:23.5px;line-height:23.5px;font-weight:400;color:#1a1a1a;letter-spacing:-1.090px;white-space:pre;">00007</div>
<div style="position:absolute;left:356.00px;top:261.11px;font-size:23.5px;line-height:23.5px;font-weight:400;color:#1a1a1a;letter-spacing:-0.328px;white-space:pre;">от</div>
<div style="position:absolute;left:414.40px;top:261.11px;font-size:23.5px;line-height:23.5px;font-weight:400;color:#1a1a1a;letter-spacing:-0.797px;white-space:pre;">12.09.2025 18:15</div>
<div style="position:absolute;left:651.00px;top:264.73px;font-size:14.5px;line-height:14.5px;font-weight:400;color:#222;letter-spacing:0.361px;white-space:pre;">Не оплачено</div>
<div style="position:absolute;left:782.00px;top:266.30px;font-size:15px;line-height:15px;font-weight:400;color:#222;letter-spacing:0.219px;white-space:pre;">Запросить оплату</div>
<div style="position:absolute;left:952.00px;top:264.30px;font-size:15px;line-height:15px;font-weight:400;color:#fff3e4;letter-spacing:-0.078px;white-space:pre;">Новый</div>
<div style="position:absolute;left:1089.50px;top:267.84px;font-size:12px;line-height:12px;font-weight:400;color:#2a5a8a;letter-spacing:0.000px;white-space:pre;">?</div>
<div style="position:absolute;left:1269.50px;top:267.84px;font-size:12px;line-height:12px;font-weight:400;color:#2a5a8a;letter-spacing:0.000px;white-space:pre;">?</div>
<div style="position:absolute;left:1140.00px;top:265.30px;font-size:15px;line-height:15px;font-weight:400;color:#1a1a1a;letter-spacing:0.250px;white-space:pre;">Проведено</div>
<div style="position:absolute;left:1320.00px;top:265.30px;font-size:15px;line-height:15px;font-weight:400;color:#1a1a1a;letter-spacing:0.373px;white-space:pre;">Резерв</div>
<div style="position:absolute;left:38.00px;top:319.00px;font-size:13px;line-height:13px;font-weight:400;color:#d0021b;letter-spacing:0.000px;white-space:pre;">*</div>
<div style="position:absolute;left:45.30px;top:317.30px;font-size:15px;line-height:15px;font-weight:400;color:#1f1f1f;letter-spacing:0.223px;white-space:pre;">Организация</div>
<div style="position:absolute;left:205.80px;top:317.30px;font-size:15px;line-height:15px;font-weight:400;color:#111;letter-spacing:0.372px;white-space:pre;">ООО "ПРИМЕР"</div>
<div style="position:absolute;left:205.80px;top:350.30px;font-size:15px;line-height:15px;font-weight:400;color:#111;letter-spacing:0.673px;white-space:pre;">40802 810 4 6442 0129810</div>
<div style="position:absolute;left:38.00px;top:391.00px;font-size:13px;line-height:13px;font-weight:400;color:#d0021b;letter-spacing:0.000px;white-space:pre;">*</div>
<div style="position:absolute;left:45.30px;top:389.30px;font-size:15px;line-height:15px;font-weight:400;color:#1f1f1f;letter-spacing:0.438px;white-space:pre;">Контрагент</div>
<div style="position:absolute;left:205.80px;top:389.30px;font-size:15px;line-height:15px;font-weight:400;color:#111;letter-spacing:0.502px;white-space:pre;">ООО "Компания"</div>
<div style="position:absolute;left:202.40px;top:420.73px;font-size:14.5px;line-height:14.5px;font-weight:400;color:#222;letter-spacing:0.245px;white-space:pre;">Баланс (нам должны):</div>
<div style="position:absolute;left:362.90px;top:420.73px;font-size:14.5px;line-height:14.5px;font-weight:400;color:#d0101a;letter-spacing:0.312px;white-space:pre;">1 079 100,00 руб</div>
<div style="position:absolute;left:45.90px;top:455.30px;font-size:15px;line-height:15px;font-weight:400;color:#1f1f1f;letter-spacing:0.204px;white-space:pre;">План. дата отгрузки</div>
<div style="position:absolute;left:45.90px;top:495.30px;font-size:15px;line-height:15px;font-weight:400;color:#1f1f1f;letter-spacing:0.251px;white-space:pre;">Канал продаж</div>
<div style="position:absolute;left:38.00px;top:536.00px;font-size:13px;line-height:13px;font-weight:400;color:#d0021b;letter-spacing:0.000px;white-space:pre;">*</div>
<div style="position:absolute;left:45.30px;top:534.30px;font-size:15px;line-height:15px;font-weight:400;color:#1f1f1f;letter-spacing:0.215px;white-space:pre;">Валюта документа</div>
<div style="position:absolute;left:195.90px;top:534.30px;font-size:15px;line-height:15px;font-weight:400;color:#111;letter-spacing:0.217px;white-space:pre;">руб (RUB)</div>
<div style="position:absolute;left:580.30px;top:317.30px;font-size:15px;line-height:15px;font-weight:400;color:#1f1f1f;letter-spacing:0.145px;white-space:pre;">Склад</div>
<div style="position:absolute;left:657.60px;top:317.30px;font-size:15px;line-height:15px;font-weight:400;color:#111;letter-spacing:0.614px;white-space:pre;">Основной склад</div>
<div style="position:absolute;left:580.30px;top:389.30px;font-size:15px;line-height:15px;font-weight:400;color:#1f1f1f;letter-spacing:0.727px;white-space:pre;">Договор</div>
<div style="position:absolute;left:580.30px;top:455.30px;font-size:15px;line-height:15px;font-weight:400;color:#1f1f1f;letter-spacing:0.316px;white-space:pre;">Проект</div>
<div style="position:absolute;left:1036.00px;top:317.30px;font-size:15px;line-height:15px;font-weight:400;color:#1f1f1f;letter-spacing:0.256px;white-space:pre;">Адрес доставки</div>
<div style="position:absolute;left:1180.00px;top:317.73px;font-size:14.5px;line-height:14.5px;font-weight:400;color:#111;letter-spacing:0.611px;white-space:pre;">Россия, г. Медвежьегорск, ул. Первая</div>
<div style="position:absolute;left:1180.00px;top:335.73px;font-size:14.5px;line-height:14.5px;font-weight:400;color:#111;letter-spacing:0.316px;white-space:pre;">Трамвайная, 11</div>
<div style="position:absolute;left:1036.00px;top:414.30px;font-size:15px;line-height:15px;font-weight:400;color:#1f1f1f;letter-spacing:0.252px;white-space:pre;">Комментарий</div>
<div style="position:absolute;left:78.80px;top:605.19px;font-size:17.5px;line-height:17.5px;font-weight:400;color:#222222;letter-spacing:0.283px;white-space:pre;">Позиции</div>
<div style="position:absolute;left:206.30px;top:605.19px;font-size:17.5px;line-height:17.5px;font-weight:400;color:#222222;letter-spacing:0.102px;white-space:pre;">Связанные документы</div>
<div style="position:absolute;left:450.70px;top:605.19px;font-size:17.5px;line-height:17.5px;font-weight:400;color:#222222;letter-spacing:-0.077px;white-space:pre;">Файлы</div>
<div style="position:absolute;left:565.00px;top:605.19px;font-size:17.5px;line-height:17.5px;font-weight:400;color:#222222;letter-spacing:0.047px;white-space:pre;">Задачи</div>
<div style="position:absolute;left:682.60px;top:605.19px;font-size:17.5px;line-height:17.5px;font-weight:400;color:#222222;letter-spacing:-0.042px;white-space:pre;">События</div>
<div style="position:absolute;left:1210.50px;top:605.61px;font-size:17px;line-height:17px;font-weight:400;color:#1a56b8;letter-spacing:0.559px;white-space:pre;">Проверить комплектацию</div>
<div style="position:absolute;left:1452.00px;top:605.61px;font-size:17px;line-height:17px;font-weight:400;color:#1a56b8;letter-spacing:0.674px;white-space:pre;">Импортировать</div>
<div style="position:absolute;left:1630.00px;top:605.61px;font-size:17px;line-height:17px;font-weight:400;color:#1a56b8;letter-spacing:0.481px;white-space:pre;">Добавить из справочника</div>
<div style="position:absolute;left:116.00px;top:668.61px;font-size:17px;line-height:17px;font-weight:400;color:#222222;letter-spacing:-0.133px;white-space:pre;">Все (1)</div>
<div style="position:absolute;left:211.00px;top:668.61px;font-size:17px;line-height:17px;font-weight:400;color:#1a56b8;letter-spacing:0.342px;white-space:pre;">Расценить</div>
<div style="position:absolute;left:322.90px;top:668.61px;font-size:17px;line-height:17px;font-weight:400;color:#1a56b8;letter-spacing:0.399px;white-space:pre;">Сохранить цены</div>
<div style="position:absolute;left:483.40px;top:668.61px;font-size:17px;line-height:17px;font-weight:400;color:#1a56b8;letter-spacing:0.719px;white-space:pre;">Скидка</div>
<div style="position:absolute;left:1330.00px;top:668.61px;font-size:17px;line-height:17px;font-weight:400;color:#222222;letter-spacing:0.461px;white-space:pre;">НДС</div>
<div style="position:absolute;left:1433.70px;top:668.61px;font-size:17px;line-height:17px;font-weight:400;color:#222222;letter-spacing:0.310px;white-space:pre;">Цена включает НДС</div>
<div style="position:absolute;left:1694.30px;top:668.61px;font-size:17px;line-height:17px;font-weight:400;color:#222222;letter-spacing:0.494px;white-space:pre;">Настроить колонки</div>
<div style="position:absolute;left:139.90px;top:719.30px;font-size:15px;line-height:15px;font-weight:400;color:#5f5f66;letter-spacing:0.074px;white-space:pre;">Наименование</div>
<div style="position:absolute;left:616.00px;top:719.30px;font-size:15px;line-height:15px;font-weight:400;color:#5f5f66;letter-spacing:-0.058px;white-space:pre;">Серия</div>
<div style="position:absolute;left:832.40px;top:719.30px;font-size:15px;line-height:15px;font-weight:400;color:#5f5f66;letter-spacing:0.137px;white-space:pre;">Количество</div>
<div style="position:absolute;left:1063.50px;top:719.30px;font-size:15px;line-height:15px;font-weight:400;color:#5f5f66;letter-spacing:0.540px;white-space:pre;">Отгруж.</div>
<div style="position:absolute;left:1170.00px;top:719.30px;font-size:15px;line-height:15px;font-weight:400;color:#5f5f66;letter-spacing:0.547px;white-space:pre;">Доступно</div>
<div style="position:absolute;left:1300.00px;top:719.30px;font-size:15px;line-height:15px;font-weight:400;color:#5f5f66;letter-spacing:0.250px;white-space:pre;">Остаток</div>
<div style="position:absolute;left:1429.30px;top:719.30px;font-size:15px;line-height:15px;font-weight:400;color:#5f5f66;letter-spacing:-0.126px;white-space:pre;">Цена</div>
<div style="position:absolute;left:1582.00px;top:719.30px;font-size:15px;line-height:15px;font-weight:400;color:#5f5f66;letter-spacing:-0.014px;white-space:pre;">НДС</div>
<div style="position:absolute;left:1636.00px;top:719.30px;font-size:15px;line-height:15px;font-weight:400;color:#5f5f66;letter-spacing:0.247px;white-space:pre;">Скидка</div>
<div style="position:absolute;left:1805.30px;top:719.30px;font-size:15px;line-height:15px;font-weight:400;color:#5f5f66;letter-spacing:0.215px;white-space:pre;">Сумма</div>
<div style="position:absolute;left:74.00px;top:756.30px;font-size:15px;line-height:15px;font-weight:400;color:#222222;letter-spacing:0.000px;white-space:pre;">1</div>
<div style="position:absolute;left:131.50px;top:756.30px;font-size:15px;line-height:15px;font-weight:700;color:#333;letter-spacing:1.021px;white-space:pre;">1476522528075647</div>
<div style="position:absolute;left:283.70px;top:756.30px;font-size:15px;line-height:15px;font-weight:400;color:#222222;letter-spacing:0.292px;white-space:pre;">Фигурка "Динозавр" Велоцираптор</div>
<div style="position:absolute;left:615.00px;top:756.30px;font-size:15px;line-height:15px;font-weight:400;color:#555;letter-spacing:-0.030px;white-space:pre;">Не указана</div>
<div style="position:absolute;left:902.80px;top:756.30px;font-size:15px;line-height:15px;font-weight:400;color:#222222;letter-spacing:0.559px;white-space:pre;">10 шт</div>
<div style="position:absolute;left:1117.00px;top:756.30px;font-size:15px;line-height:15px;font-weight:400;color:#222222;letter-spacing:0.000px;white-space:pre;">0</div>
<div style="position:absolute;left:1235.50px;top:756.30px;font-size:15px;line-height:15px;font-weight:400;color:#222222;letter-spacing:0.000px;white-space:pre;">0</div>
<div style="position:absolute;left:1353.50px;top:756.30px;font-size:15px;line-height:15px;font-weight:400;color:#222222;letter-spacing:0.000px;white-space:pre;">0</div>
<div style="position:absolute;left:1443.60px;top:756.30px;font-size:15px;line-height:15px;font-weight:400;color:#222222;letter-spacing:0.962px;white-space:pre;">200,00</div>
<div style="position:absolute;left:1596.70px;top:756.30px;font-size:15px;line-height:15px;font-weight:400;color:#222222;letter-spacing:0.113px;white-space:pre;">5%</div>
<div style="position:absolute;left:1701.50px;top:756.30px;font-size:15px;line-height:15px;font-weight:400;color:#222222;letter-spacing:0.812px;white-space:pre;">0%</div>
<div style="position:absolute;left:1792.30px;top:756.30px;font-size:15px;line-height:15px;font-weight:400;color:#222222;letter-spacing:0.873px;white-space:pre;">2 000,00</div>
<div style="position:absolute;left:127.30px;top:791.61px;font-size:17px;line-height:17px;font-weight:400;color:#8c8c92;letter-spacing:0.336px;white-space:pre;">Добавить позицию — введите наименование, код, штрихкод или а...</div>
<div style="position:absolute;left:1584.20px;top:792.46px;font-size:16px;line-height:16px;font-weight:700;color:#1a1a1a;letter-spacing:0.677px;white-space:pre;">Кол-во: 10</div>
<div style="position:absolute;left:1698.20px;top:792.46px;font-size:16px;line-height:16px;font-weight:700;color:#1a1a1a;letter-spacing:0.717px;white-space:pre;">Объем: 0</div>
<div style="position:absolute;left:1803.40px;top:792.46px;font-size:16px;line-height:16px;font-weight:700;color:#1a1a1a;letter-spacing:-0.163px;white-space:pre;">Вес: 1</div>
<div style="position:absolute;left:55.00px;top:871.61px;font-size:17px;line-height:17px;font-weight:400;color:#a0a0a5;letter-spacing:0.592px;white-space:pre;">Комментарий</div>
<div style="position:absolute;left:45.90px;top:971.61px;font-size:17px;line-height:17px;font-weight:400;color:#1d5fb8;letter-spacing:0.384px;white-space:pre;">Внешний код</div>
<div style="position:absolute;left:1536.30px;top:855.61px;font-size:17px;line-height:17px;font-weight:400;color:#222222;letter-spacing:0.603px;white-space:pre;">Промежуточный итог</div>
<div style="position:absolute;left:1775.40px;top:855.61px;font-size:17px;line-height:17px;font-weight:400;color:#222222;letter-spacing:1.202px;white-space:pre;">2 000,00</div>
<div style="position:absolute;left:1615.00px;top:888.61px;font-size:17px;line-height:17px;font-weight:400;color:#222222;letter-spacing:0.448px;white-space:pre;">Сумма НДС</div>
<div style="position:absolute;left:1802.80px;top:888.61px;font-size:17px;line-height:17px;font-weight:400;color:#222222;letter-spacing:1.163px;white-space:pre;">95,24</div>
<div style="position:absolute;left:1492.70px;top:920.84px;font-size:25px;line-height:25px;font-weight:700;color:#1a1a1a;letter-spacing:-0.201px;white-space:pre;">Общая стоимость</div>
<div style="position:absolute;left:1739.50px;top:920.84px;font-size:25px;line-height:25px;font-weight:700;color:#1a1a1a;letter-spacing:1.882px;white-space:pre;">2 000,00</div>
</body></html>
